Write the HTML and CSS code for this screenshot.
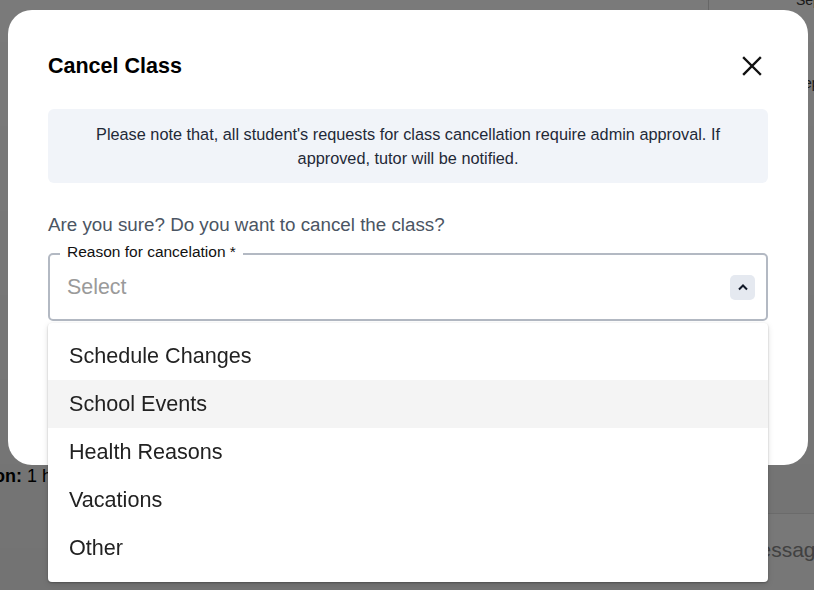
FILE: index.html
```html
<!DOCTYPE html>
<html lang="en">
<head>
  <meta charset="UTF-8">
  <meta name="viewport" content="width=device-width, initial-scale=1.0">
  <title>Cancel Class</title>
  <link rel="stylesheet" href="styles.css">
</head>
<body>
  <div class="page">
    <div class="page-divider"></div>
    <span class="page-date">Sep</span>
    <span class="page-date2">ep</span>
    <span class="page-duration"><b>on:</b> 1 h</span>
    <div class="page-message">Message</div>
  </div>

  <div class="overlay">
    <div class="modal">
      <div class="modal-head">
        <h2>Cancel Class</h2>
        <button class="close" aria-label="Close">
          <svg width="20" height="20" viewBox="0 0 20 20"><path d="M2 2 L18 18 M18 2 L2 18" stroke="#111" stroke-width="2.4" stroke-linecap="square"/></svg>
        </button>
      </div>

      <div class="notice">
        Please note that, all student's requests for class cancellation require admin approval. If approved, tutor will be notified.
      </div>

      <p class="question">Are you sure? Do you want to cancel the class?</p>

      <div class="field">
        <span class="field-label">Reason for cancelation *</span>
        <span class="placeholder">Select</span>
        <span class="chevron">
          <svg width="12" height="8" viewBox="0 0 12 8"><path d="M2 6.5 L6 2.5 L10 6.5" fill="none" stroke="#111827" stroke-width="2"/></svg>
        </span>
        <ul class="menu">
          <li>Schedule Changes</li>
          <li class="active">School Events</li>
          <li>Health Reasons</li>
          <li>Vacations</li>
          <li>Other</li>
        </ul>
      </div>
    </div>
  </div>
</body>
</html>
```

FILE: styles.css
```css
*{
  margin: 0;
  padding: 0;
  box-sizing: border-box;
}
body{
  width: 814px;
  height: 590px;
  overflow: hidden;
  font-family: "Liberation Sans", Arial, sans-serif;
  background: #fff;
}

/* page behind the dimmed overlay */
.page{
  position: relative;
  width: 814px;
  height: 590px;
  background: #f4f4f4;
}
.page-divider{
  position: absolute;
  left: 708px;
  top: 0;
  width: 1px;
  height: 12px;
  background: #cfcfcf;
}
.page-date{
  position: absolute;
  left: 796px;
  top: -8px;
  font-size: 14px;
  color: #333;
}
.page-date2{
  position: absolute;
  left: 804px;
  top: 75px;
  font-size: 14px;
  color: #333;
}
.page-duration{
  position: absolute;
  left: -6px;
  top: 466px;
  font-size: 18px;
  color: #000;
}
.page-message{
  position: absolute;
  left: 700px;
  top: 513px;
  width: 114px;
  height: 77px;
  padding: 24px 0 0 42px;
  background: #fdfdfd;
  border-top: 1px solid #e2e2e2;
  font-size: 21px;
  color: #8a8a8a;
}

.overlay{
  position: fixed;
  inset: 0;
  background: linear-gradient(rgba(0,0,0,.5), rgba(0,0,0,.53));
}
.modal{
  position: absolute;
  left: 8px;
  top: 10px;
  width: 800px;
  height: 455px;
  padding: 38px 40px 0;
  background: #fff;
  border-radius: 24px;
}
.modal-head{
  display: flex;
  justify-content: space-between;
  align-items: center;
  height: 36px;
}
.modal-head h2{
  font-size: 21.5px;
  font-weight: bold;
  color: #000;
}
.close{
  border: none;
  background: none;
  width: 24px;
  height: 24px;
  display: flex;
  align-items: center;
  justify-content: center;
  margin-right: 4px;
}

.notice{
  margin-top: 25px;
  height: 74px;
  padding: 13px 36px 0;
  background: #f1f4f9;
  border-radius: 6px;
  text-align: center;
  font-size: 16.3px;
  line-height: 24px;
  color: #1f2937;
}

.question{
  margin-top: 31px;
  font-size: 18.8px;
  line-height: 22px;
  color: #4b5563;
}

.field{
  position: relative;
  margin-top: 17px;
  height: 68px;
  border: 2px solid #b3b9c3;
  border-radius: 5px;
  display: flex;
  align-items: center;
  padding: 0 11px 0 17px;
}
.field-label{
  position: absolute;
  left: 10px;
  top: -12px;
  padding: 0 7px;
  background: #fff;
  font-size: 15.5px;
  line-height: 18px;
  color: #111;
}
.placeholder{
  flex: 1;
  font-size: 21.4px;
  color: #9a9a9a;
}
.chevron{
  width: 25px;
  height: 25px;
  display: flex;
  align-items: center;
  justify-content: center;
  background: #e5e9f0;
  border-radius: 5px;
}

.menu{
  position: absolute;
  left: -2px;
  right: -2px;
  top: 68px;
  list-style: none;
  padding: 9px 0 10px;
  background: #fff;
  border-radius: 4px;
  box-shadow: 0 1px 2px rgba(0,0,0,.25), 0 2px 6px rgba(0,0,0,.12);
}
.menu li{
  height: 48px;
  display: flex;
  align-items: center;
  padding-left: 21px;
  font-size: 21.6px;
  color: #222;
}
.menu li.active{
  background: #f4f4f4;
}
```
